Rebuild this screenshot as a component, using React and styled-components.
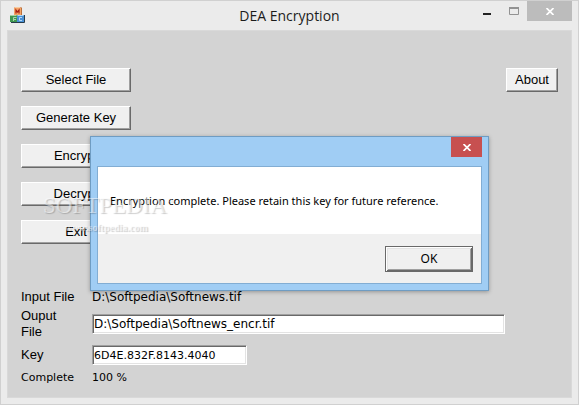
import React from 'react';
import styled, { createGlobalStyle } from 'styled-components';

const GlobalStyle = createGlobalStyle`
	* {
		box-sizing: border-box;
	}
	body {
		margin: 0;
		color: #000;
		font-family: 'Liberation Sans', Arial, sans-serif;
		font-size: 13px;
	}
	button,
	input {
		margin: 0;
		color: inherit;
		font: inherit;
	}
`;

const Window = styled.main`
	position: relative;
	display: flex;
	flex-direction: column;
	min-height: 100vh;
	padding: 0 6px 6px;
	border: 1px solid #d0d0d0;
	background: #ebebeb;
`;

const TitleBar = styled.header`
	display: grid;
	grid-template-columns: 1fr auto 1fr;
	height: 29px;

	h1 {
		margin: 0;
		color: #1c1c1c;
		font: 400 14px/30px 'Open Sans', sans-serif;
	}
`;

const AppIcon = styled.svg`
	width: 16px;
	height: 16px;
	margin: 6px 0 0 3px;
`;

const Controls = styled.div`
	display: flex;
	justify-content: flex-end;
`;

const ControlButton = styled.button`
	display: grid;
	place-items: center;
	width: ${(props) => props.$width}px;
	height: 20px;
	padding: 0;
	border: 0;
	background: ${(props) => props.$color || 'transparent'};
`;

const Client = styled.div`
	flex: 1;
	padding: 37px 13px 6px;
	border: 1px solid #d9d9d9;
	background: #d3d3d3;
`;

const Toolbar = styled.div`
	display: flex;
	justify-content: space-between;
	align-items: flex-start;
	margin-bottom: 45px;
`;

const Actions = styled.div`
	display: grid;
	gap: 14px;
`;

const Button = styled.button`
	width: ${(props) => props.$width}px;
	height: 24px;
	padding: 0;
	border: 1px solid;
	border-color: #fff #696969 #696969 #fff;
	background: #f0f0f0;
	box-shadow: inset -1px -1px #a0a0a0;
	line-height: 20px;
`;

const Fields = styled.form`
	display: grid;
	gap: 3px;
`;

const Row = styled.div`
	display: grid;
	grid-template-columns: 59px 1fr;
	column-gap: 12px;
	align-items: center;
	min-height: ${(props) => props.$height}px;
	line-height: 16px;
`;

const Value = styled.span`
	font: ${(props) => props.$size || 11}px/16px 'DejaVu Sans', Verdana, sans-serif;
`;

const TextBox = styled.input`
	width: ${(props) => props.$width};
	height: 20px;
	padding: 0 1px;
	border: 1px solid;
	border-color: #a0a0a0 #fff #fff #a0a0a0;
	border-radius: 0;
	background: #fff;
	box-shadow: inset 1px 1px #696969, inset -1px -1px #e3e3e3;
	font: ${(props) => props.$size || 11}px/16px 'DejaVu Sans', Verdana, sans-serif;
	outline: 0;
`;

const Dialog = styled.section`
	position: absolute;
	top: 135px;
	right: 0;
	left: 0;
	width: 399px;
	margin: 0 auto;
	padding: 0 6px 6px;
	border: 1px solid #6f9cc2;
	background: #a0cdf4;
	box-shadow: 0 1px 4px rgba(0, 0, 0, 0.3);
	font: 11px/16px 'Noto Sans', 'Open Sans', sans-serif;
`;

const DialogTitle = styled.header`
	display: flex;
	justify-content: flex-end;
	height: 29px;
`;

const DialogBody = styled.div`
	border: 1px solid #82add3;
	background: #fff;

	p {
		margin: 0;
		padding: 26px 12px 25px;
		white-space: nowrap;
	}
`;

const DialogFooter = styled.footer`
	display: flex;
	justify-content: flex-end;
	padding: 12px 8px 11px;
	background: #f0f0f0;
`;

const OkButton = styled.button`
	width: 88px;
	height: 26px;
	padding: 0;
	border: 1px solid #696969;
	background: #f0f0f0;
	box-shadow: inset 1px 1px #fff, inset -1px -1px #696969,
		inset 2px 2px #e3e3e3, inset -2px -2px #a0a0a0;
	font-size: 12px;
`;

const Watermark = styled.div`
	position: absolute;
	top: 193px;
	left: 42px;
	display: grid;
	color: rgba(255, 255, 255, 0.5);
	font: 23px/24px 'Liberation Serif', serif;
	text-shadow: 1px 1px 1px rgba(0, 0, 0, 0.2);
	pointer-events: none;

	sup {
		font-size: 8px;
		line-height: 8px;
		vertical-align: 9px;
	}
	small {
		padding-left: 22px;
		font: 700 10px/20px 'Liberation Serif', serif;
	}
`;

const actions = ['Select File', 'Generate Key', 'Encrypt', 'Decrypt', 'Exit'];

function BlocksIcon() {
	return (
		<AppIcon viewBox='0 0 16 16' aria-hidden='true'>
			<path d='M4 1l1-1h6l1 1v7H4z' fill='#b9703c' />
			<path d='M4 1h7v7H4z' fill='#f3a265' />
			<path d='M5 0h6l-1 1H4z' fill='#f9cba2' />
			<path d='M6 6.500V3l1.500 2L9 3v3.500' fill='none' stroke='#a51c12' strokeWidth='1.200' />
			<path d='M1 8h7v7H0V9z' fill='#3f9650' />
			<path d='M1 8h6l-1 1H0z' fill='#a5d3a5' />
			<path d='M3.500 14v-3.500h3M3.500 12.500H6' fill='none' stroke='#a9d6ab' />
			<path d='M8 8h7v7H7V9z' fill='#4a91d6' />
			<path d='M8 8h6l-1 1H7z' fill='#b0d7f5' />
			<path d='M12 10.500H9.500v3H12' fill='none' stroke='#b5d8f5' />
			<path d='M14.500 8v7.500H1' fill='none' stroke='#263a4a' />
		</AppIcon>
	);
}

function Cross() {
	return (
		<svg width='8' height='7' viewBox='0 0 8 7' aria-hidden='true'>
			<path d='M.5 0l7 7M7.500 0l-7 7' stroke='#fff' strokeWidth='1.700' />
		</svg>
	);
}

function MessageBox() {
	return (
		<Dialog role='dialog' aria-describedby='message'>
			<DialogTitle>
				<ControlButton $width={31} $color='#c75050' aria-label='Close message'>
					<Cross />
				</ControlButton>
			</DialogTitle>
			<DialogBody>
				<p id='message'>
					Encryption complete. Please retain this key for future reference.
				</p>
				<DialogFooter>
					<OkButton>OK</OkButton>
				</DialogFooter>
			</DialogBody>
		</Dialog>
	);
}

function App() {
	return (
		<Window>
			<GlobalStyle />
			<TitleBar>
				<BlocksIcon />
				<h1>DEA Encryption</h1>
				<Controls>
					<ControlButton $width={28} aria-label='Minimize'>
						<svg width='8' height='8' viewBox='0 0 8 8'>
							<path d='M0 6h8v2H0z' fill='#222' />
						</svg>
					</ControlButton>
					<ControlButton $width={26} aria-label='Maximize'>
						<svg width='10' height='8' viewBox='0 0 10 8'>
							<path d='M.5 1v6.500h9V1' fill='none' stroke='#929292' />
							<path d='M0 0h10v2H0z' fill='#929292' />
						</svg>
					</ControlButton>
					<ControlButton $width={45} $color='#bcbcbc' aria-label='Close'>
						<Cross />
					</ControlButton>
				</Controls>
			</TitleBar>
			<Client>
				<Toolbar>
					<Actions>
						{actions.map((label) => (
							<Button key={label} $width={110}>
								{label}
							</Button>
						))}
					</Actions>
					<Button $width={52}>About</Button>
				</Toolbar>
				<Fields>
					<Row $height={16}>
						<span>Input File</span>
						<Value $size={12}>D:\Softpedia\Softnews.tif</Value>
					</Row>
					<Row $height={32}>
						<label htmlFor='output'>Ouput File</label>
						<TextBox
							id='output'
							$width='calc(100% - 53px)'
							$size={12}
							defaultValue='D:\Softpedia\Softnews_encr.tif'
						/>
					</Row>
					<Row $height={24}>
						<label htmlFor='key'>Key</label>
						<TextBox
							id='key'
							$width='155px'
							defaultValue='6D4E.832F.8143.4040'
						/>
					</Row>
					<Row $height={16}>
						<Value>Complete</Value>
						<Value>100 %</Value>
					</Row>
				</Fields>
			</Client>
			<MessageBox />
			<Watermark aria-hidden='true'>
				<span>
					SOFTPEDIA<sup>™</sup>
				</span>
				<small>www.softpedia.com</small>
			</Watermark>
		</Window>
	);
}

export default App;
